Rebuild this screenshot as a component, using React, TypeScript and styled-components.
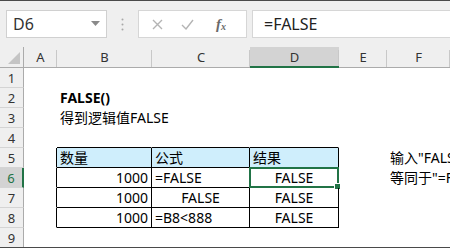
import { ReactElement } from 'react';
import styled, { createGlobalStyle } from 'styled-components';

/** Interfaces */
interface CellProps {
    $align?: 'left' | 'right' | 'center';
    $bold?: boolean;
    $fill?: boolean;
    $right?: boolean;
    $bottom?: boolean;
}

interface HeaderProps {
    $active?: boolean;
}

interface CellData {
    text?: string;
    align?: 'left' | 'right' | 'center';
    bold?: boolean;
    fill?: boolean;
    right?: boolean;
    bottom?: boolean;
    selected?: boolean;
}

const GREEN = '#217346';

/** Styled Components */
const GlobalStyle = createGlobalStyle`
    body {
        margin: 0;
        overflow: hidden;
        font-family: 'Noto Sans', 'Noto Sans CJK SC', sans-serif;
    }
`;

const Window = styled.div`
    width: 450px;
    height: 248px;
    overflow: hidden;
    background: #ffffff;
    border-top: 1px solid #4a4a4a;
    border-bottom: 1px solid #4a4a4a;
    box-sizing: border-box;
    display: flex;
    flex-direction: column;
`;

const FormulaBar = styled.div`
    height: 46px;
    flex-shrink: 0;
    background: #efefef;
    display: flex;
    align-items: center;
    padding: 0 0 0 6px;
    box-sizing: border-box;
`;

const NameBox = styled.div`
    width: 101px;
    height: 28px;
    box-sizing: border-box;
    background: #ffffff;
    border: 1px solid #d0d0d0;
    display: flex;
    align-items: center;
    justify-content: space-between;
    padding: 0 6px 0 6px;
    font-size: 16px;
    color: #333333;
`;

const Dots = styled.div`
    width: 31px;
    display: flex;
    justify-content: center;
`;

const FuncBox = styled.div`
    width: 109px;
    height: 28px;
    box-sizing: border-box;
    background: #ffffff;
    border: 1px solid #d6d6d6;
    display: flex;
    align-items: center;
    padding: 0 0 0 13px;
    gap: 18px;
`;

const Fx = styled.span`
    font-family: 'Liberation Serif', serif;
    font-style: italic;
    font-weight: 700;
    font-size: 15px;
    color: #6a6a6a;
    margin-left: 4px;

    sub {
        font-size: 10px;
        vertical-align: -1px;
    }
`;

const FormulaInput = styled.div`
    flex: 1;
    height: 28px;
    margin-left: 5px;
    box-sizing: border-box;
    background: #ffffff;
    border: 1px solid #d6d6d6;
    border-right: none;
    display: flex;
    align-items: center;
    padding-left: 11px;
    font-size: 16px;
    color: #222222;
`;

const Sheet = styled.div`
    display: grid;
    grid-template-columns: 24px 33px 95px 98px 89px 48px 63px;
    grid-template-rows: 21px;
    grid-auto-rows: 20px;
    flex: 1;
    font-size: 14px;
    color: #000000;
`;

const Corner = styled.div`
    background: #efefef;
    border-right: 1px solid #ababab;
    border-bottom: 1px solid #ababab;
    box-sizing: border-box;
    display: flex;
    align-items: flex-end;
    justify-content: flex-end;
    padding: 0 3px 3px 0;
`;

const ColHeader = styled.div<HeaderProps>`
    position: relative;
    background: ${(p) => (p.$active ? '#d3d3d3' : '#efefef')};
    border-bottom: ${(p) => (p.$active ? `2px solid ${GREEN}` : '1px solid #ababab')};
    box-sizing: border-box;
    display: flex;
    align-items: center;
    justify-content: center;
    font-size: 13px;
    color: #333333;

    &::after {
        content: '';
        position: absolute;
        right: 0;
        top: 3px;
        bottom: 0;
        width: 1px;
        background: #c8c8c8;
    }
`;

const RowHeader = styled.div<HeaderProps>`
    background: ${(p) => (p.$active ? '#d3d3d3' : '#efefef')};
    border-right: ${(p) => (p.$active ? `2px solid ${GREEN}` : '1px solid #ababab')};
    border-bottom: 1px solid #d4d4d4;
    box-sizing: border-box;
    display: flex;
    align-items: center;
    justify-content: center;
    font-size: 13px;
    color: ${(p) => (p.$active ? GREEN : '#333333')};
`;

const Cell = styled.div<CellProps>`
    position: relative;
    box-sizing: border-box;
    background: ${(p) => (p.$fill ? '#cfeefc' : 'transparent')};
    border-right: 1px solid ${(p) => (p.$right ? '#000000' : 'transparent')};
    border-bottom: 1px solid ${(p) => (p.$bottom ? '#000000' : 'transparent')};
    display: flex;
    align-items: flex-end;
    justify-content: ${(p) =>
        p.$align === 'right' ? 'flex-end' : p.$align === 'center' ? 'center' : 'flex-start'};
    padding: 0 3px 0 3px;
    font-weight: ${(p) => (p.$bold ? 700 : 400)};
    line-height: 18px;
    white-space: nowrap;
`;

const Selection = styled.div`
    position: absolute;
    left: -1px;
    top: -1px;
    right: -1px;
    bottom: -1px;
    border: 2px solid ${GREEN};
    pointer-events: none;

    &::after {
        content: '';
        position: absolute;
        right: -4px;
        bottom: -4px;
        width: 5px;
        height: 5px;
        background: ${GREEN};
        border: 1px solid #ffffff;
    }
`;

/** Data */
const columns = ['A', 'B', 'C', 'D', 'E', 'F'];

const tb = { right: true, bottom: true };

const rows: CellData[][] = [
    [{}, {}, {}, {}, {}, {}],
    [{}, { text: 'FALSE()', bold: true }, {}, {}, {}, {}],
    [{}, { text: '得到逻辑值FALSE' }, {}, {}, {}, {}],
    [{}, { bottom: true }, { bottom: true }, { bottom: true }, {}, {}],
    [
        { right: true },
        { text: '数量', fill: true, ...tb },
        { text: '公式', fill: true, ...tb },
        { text: '结果', fill: true, ...tb },
        {},
        { text: '输入"FALSE"或"=FALSE()"' },
    ],
    [
        { right: true },
        { text: '1000', align: 'right', ...tb },
        { text: '=FALSE', ...tb },
        { text: 'FALSE', align: 'center', selected: true, ...tb },
        {},
        { text: '等同于"=FALSE()"' },
    ],
    [
        { right: true },
        { text: '1000', align: 'right', ...tb },
        { text: 'FALSE', align: 'center', ...tb },
        { text: 'FALSE', align: 'center', ...tb },
        {},
        {},
    ],
    [
        { right: true },
        { text: '1000', align: 'right', ...tb },
        { text: '=B8<888', ...tb },
        { text: 'FALSE', align: 'center', ...tb },
        {},
        {},
    ],
    [{}, {}, {}, {}, {}, {}],
];

/**
 * Spreadsheet App Component
 */
const App = (): ReactElement => {
    return (
        <>
            <GlobalStyle />
            <Window>
                <FormulaBar>
                    <NameBox>
                        <span>D6</span>
                        <svg width="9" height="6" viewBox="0 0 9 6">
                            <path d="M0 0 L9 0 L4.5 5 Z" fill="#8a8a8a" />
                        </svg>
                    </NameBox>
                    <Dots>
                        <svg width="3" height="13" viewBox="0 0 3 13">
                            <circle cx="1.5" cy="1.5" r="1" fill="#a8a8a8" />
                            <circle cx="1.5" cy="6.5" r="1" fill="#a8a8a8" />
                            <circle cx="1.5" cy="11.5" r="1" fill="#a8a8a8" />
                        </svg>
                    </Dots>
                    <FuncBox>
                        <svg width="11" height="11" viewBox="0 0 11 11">
                            <path d="M1 1 L10 10 M10 1 L1 10" stroke="#b4b4b4" strokeWidth="1.4" />
                        </svg>
                        <svg width="13" height="11" viewBox="0 0 13 11">
                            <path d="M1 6 L5 10 L12 1" stroke="#b4b4b4" strokeWidth="1.4" fill="none" />
                        </svg>
                        <Fx>
                            f<sub>x</sub>
                        </Fx>
                    </FuncBox>
                    <FormulaInput>=FALSE</FormulaInput>
                </FormulaBar>
                <Sheet>
                    <Corner>
                        <svg width="12" height="12" viewBox="0 0 12 12">
                            <path d="M12 0 L12 12 L0 12 Z" fill="#c4c4c4" />
                        </svg>
                    </Corner>
                    {columns.map((c) => (
                        <ColHeader key={c} $active={c === 'D'}>
                            {c}
                        </ColHeader>
                    ))}
                    {rows.map((row, r) => (
                        <Row key={r} index={r + 1} cells={row} />
                    ))}
                </Sheet>
            </Window>
        </>
    );
};

const Row = ({ index, cells }: { index: number; cells: CellData[] }): ReactElement => (
    <>
        <RowHeader $active={index === 6}>{index}</RowHeader>
        {cells.map((cell, i) => (
            <Cell
                key={i}
                $align={cell.align}
                $bold={cell.bold}
                $fill={cell.fill}
                $right={cell.right}
                $bottom={cell.bottom}
            >
                {cell.text}
                {cell.selected && <Selection />}
            </Cell>
        ))}
    </>
);

export default App;
